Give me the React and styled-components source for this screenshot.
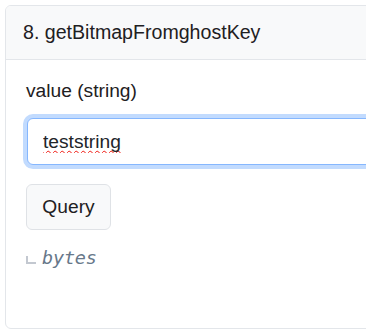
import React from 'react';
import styled, { createGlobalStyle } from 'styled-components';

const baseFont = "'Liberation Sans', Arial, sans-serif";
const monoFont = "'DejaVu Sans Mono', 'Liberation Mono', monospace";

const GlobalStyle = createGlobalStyle`
    html, body {
        margin: 0;
        padding: 0;
        background: #fff;
        overflow: hidden;
    }
    body {
        font-family: ${baseFont};
        color: #212529;
    }
`;

const Page = styled.div`
    padding: 5px 0 0 5px;
`;

const Card = styled.section`
    width: 440px;
    border: 1px solid #e3e6ea;
    border-radius: 6px;
    background: #fff;
    overflow: hidden;
`;

const CardHeader = styled.header`
    background: #f8f9fa;
    border-bottom: 1px solid #e3e6ea;
    padding: 12px 17px;
    font-size: 19.6px;
    line-height: 28.8px;
    color: #1e2022;
`;

const CardBody = styled.div`
    padding: 17px 20px 56px 20px;
`;

const FieldLabel = styled.label`
    display: block;
    font-size: 19.2px;
    line-height: 28.5px;
    margin-bottom: 13px;
    color: #1e2022;
`;

const TextInput = styled.input`
    display: block;
    box-sizing: border-box;
    width: 400px;
    height: 47px;
    margin: 0 0 0 1px;
    padding: 0 15px;
    font-family: ${baseFont};
    font-size: 19.2px;
    line-height: 32px;
    color: #212529;
    background: #fff;
    border: 1px solid #86b7fe;
    border-radius: 6px;
    box-shadow: 0 0 0 4px #c2dbfe;
    outline: none;
    text-decoration-line: underline;
    text-decoration-style: wavy;
    text-decoration-color: #f01810;
    text-decoration-thickness: 1px;
    text-underline-offset: 2px;
    text-decoration-skip-ink: none;
`;

const QueryButton = styled.button`
    display: block;
    box-sizing: border-box;
    margin-top: 19px;
    width: 85px;
    height: 46px;
    padding: 0;
    font-family: ${baseFont};
    font-size: 19.2px;
    color: #1e2022;
    background: #f8f9fa;
    border: 1px solid #dfe2e6;
    border-radius: 6px;
    cursor: pointer;
`;

const Result = styled.div`
    display: flex;
    align-items: center;
    gap: 6px;
    margin-top: 14px;
    line-height: 28px;
`;

const Corner = styled.span`
    display: inline-block;
    box-sizing: border-box;
    width: 10px;
    height: 8px;
    margin-top: 3px;
    border-left: 2px solid #c3c8d0;
    border-bottom: 2px solid #c3c8d0;
`;

const TypeName = styled.i`
    font-family: ${monoFont};
    font-size: 18.5px;
    letter-spacing: -0.2px;
    color: #67788a;
`;

export default function App() {
    return (
        <>
            <GlobalStyle />
            <Page>
                <Card>
                    <CardHeader>8. getBitmapFromghostKey</CardHeader>
                    <CardBody>
                        <FieldLabel htmlFor="value">value (string)</FieldLabel>
                        <TextInput id="value" defaultValue="teststring" spellCheck={false} />
                        <QueryButton type="button">Query</QueryButton>
                        <Result>
                            <Corner />
                            <TypeName>bytes</TypeName>
                        </Result>
                    </CardBody>
                </Card>
            </Page>
        </>
    );
}
